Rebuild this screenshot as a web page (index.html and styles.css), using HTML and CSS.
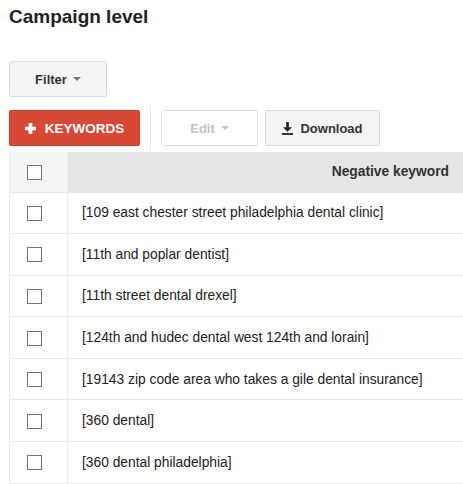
FILE: index.html
```html
<!DOCTYPE html>
<html lang="en">
<head>
  <meta charset="UTF-8" />
  <title>Campaign level</title>
  <link rel="stylesheet" href="styles.css">
</head>
<body>
  <h1 class="title">Campaign level</h1>

  <div class="filter-bar">
    <button class="btn btn-grey">Filter <span class="caret"></span></button>
  </div>

  <div class="toolbar">
    <button class="btn btn-red">
      <svg class="plus" viewBox="0 0 12 12" aria-hidden="true">
        <rect x="4" y="0" width="4" height="12" fill="#fff"/>
        <rect x="0" y="4" width="12" height="4" fill="#fff"/>
      </svg>
      KEYWORDS
    </button>
    <span class="sep"></span>
    <button class="btn btn-disabled" disabled>Edit <span class="caret"></span></button>
    <button class="btn btn-grey btn-download">
      <svg class="dl" viewBox="0 0 12 14" aria-hidden="true">
        <rect x="4.5" y="0" width="3" height="6" fill="#222"/>
        <polygon points="1,5.5 11,5.5 6,10.5" fill="#222"/>
        <rect x="0" y="12" width="12" height="2" fill="#222"/>
      </svg>
      Download
    </button>
  </div>

  <table class="grid">
    <thead>
      <tr>
        <th class="col-check"><span class="box"></span></th>
        <th class="col-kw">Negative keyword</th>
      </tr>
    </thead>
    <tbody>
      <tr><td class="col-check"><span class="box"></span></td><td>[109 east chester street philadelphia dental clinic]</td></tr>
      <tr><td class="col-check"><span class="box"></span></td><td>[11th and poplar dentist]</td></tr>
      <tr><td class="col-check"><span class="box"></span></td><td>[11th street dental drexel]</td></tr>
      <tr><td class="col-check"><span class="box"></span></td><td>[124th and hudec dental west 124th and lorain]</td></tr>
      <tr><td class="col-check"><span class="box"></span></td><td>[19143 zip code area who takes a gile dental insurance]</td></tr>
      <tr><td class="col-check"><span class="box"></span></td><td>[360 dental]</td></tr>
      <tr><td class="col-check"><span class="box"></span></td><td>[360 dental philadelphia]</td></tr>
    </tbody>
  </table>
</body>
</html>
```

FILE: styles.css
```css
html, body {
  margin: 0;
  background: #fff;
  overflow: hidden;
}
body {
  font-family: 'Liberation Sans', Arial, sans-serif;
  color: #222;
  padding-left: 9px;
}

.title {
  font-size: 19px;
  line-height: 22px;
  font-weight: 700;
  margin: 6px 0 0;
  color: #222;
}

.filter-bar {
  margin-top: 33px;
}

.btn {
  font-family: inherit;
  font-size: 13px;
  font-weight: 700;
  height: 36px;
  border-radius: 2px;
  box-sizing: border-box;
  display: inline-flex;
  align-items: center;
  justify-content: center;
  padding: 0;
  cursor: pointer;
}
.btn-grey {
  background: #f4f4f4;
  border: 1px solid #dcdcdc;
  color: #333;
  width: 98px;
}
.btn-red {
  background: #d74836;
  border: 1px solid #c94232;
  color: #fff;
  width: 131px;
  gap: 9px;
  font-size: 13.5px;
}
.btn-disabled {
  background: #fff;
  border: 1px solid #e2e2e2;
  color: #c4c4c4;
  width: 97px;
  cursor: default;
}
.btn-download {
  width: 115px;
  gap: 7px;
  margin-left: 7px;
}

.caret {
  display: inline-block;
  width: 0;
  height: 0;
  border-left: 4px solid transparent;
  border-right: 4px solid transparent;
  border-top: 4px solid #777;
  margin-left: 6px;
}
.btn-disabled .caret {
  border-top-color: #c4c4c4;
}

.plus {
  width: 11px;
  height: 11px;
}
.dl {
  width: 11px;
  height: 13px;
}

.toolbar {
  margin-top: 13px;
  display: flex;
  align-items: center;
}
.sep {
  width: 1px;
  height: 46px;
  margin: -5px 10px;
  background: #e6e6e6;
}

.grid {
  margin-top: 6px;
  border-collapse: collapse;
  width: 468px;
  font-size: 13.8px;
  border-left: 1px solid #ebebeb;
}
.grid th {
  height: 40px;
  box-sizing: border-box;
  background: #e5e5e5;
  color: #333;
  font-weight: 700;
  text-align: right;
  padding: 0 28px 0 0;
  border-bottom: 1px solid #ebebeb;
}
.grid td {
  height: 41.6px;
  box-sizing: border-box;
  padding: 0 0 0 14px;
  border-bottom: 1px solid #ebebeb;
  color: #222;
  white-space: nowrap;
}
.grid .col-check {
  width: 58px;
  box-sizing: border-box;
  padding: 0 0 0 17px;
  text-align: left;
  border-right: 1px solid #ebebeb;
}
.grid th.col-check {
  background: #f4f4f4;
}
.box {
  display: inline-block;
  width: 15px;
  height: 15px;
  box-sizing: border-box;
  border: 1px solid #747474;
  background: #fff;
  vertical-align: middle;
}
```
